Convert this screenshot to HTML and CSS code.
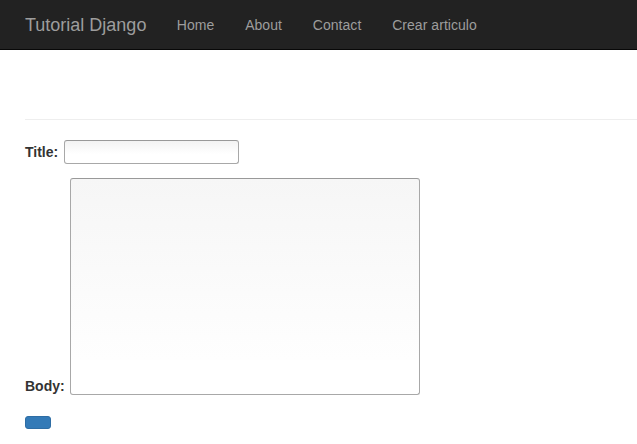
FILE: index.html
```html
<!DOCTYPE html>
<html>
<head>
<meta charset="utf-8">
<title>Tutorial Django</title>
<link rel="stylesheet" href="styles.css">
</head>
<body>
<nav class="navbar">
  <a class="brand" href="#">Tutorial Django</a>
  <ul class="nav">
    <li><a href="#">Home</a></li>
    <li><a href="#">About</a></li>
    <li><a href="#">Contact</a></li>
    <li><a href="#">Crear articulo</a></li>
  </ul>
</nav>
<main class="content">
  <hr class="rule">
  <form class="form">
    <div class="row row-title">
      <label class="label label-title" for="title">Title:</label>
      <input class="input" id="title" type="text">
    </div>
    <div class="row row-body">
      <label class="label label-body" for="body">Body:</label>
      <textarea class="textarea" id="body"></textarea>
    </div>
    <button class="submit" type="submit"></button>
  </form>
</main>
</body>
</html>
```
FILE: styles.css
```css
* { box-sizing: border-box; }
html, body { margin: 0; padding: 0; }
body {
  font-family: "Liberation Sans", Arial, sans-serif;
  font-size: 14px;
  line-height: 20px;
  color: #333;
  background: #fff;
}
.navbar {
  display: flex;
  height: 50px;
  background: #222;
  border-bottom: 1px solid #080808;
  padding-left: 10px;
}
.brand {
  display: block;
  padding: 15px;
  height: 49px;
  font-size: 18px;
  line-height: 20px;
  color: #9d9d9d;
  text-decoration: none;
}
.nav {
  display: flex;
  list-style: none;
  margin: 0;
  padding: 0;
}
.nav a {
  display: block;
  padding: 15px 15.4px;
  line-height: 20px;
  color: #9d9d9d;
  text-decoration: none;
  letter-spacing: 0.05px;
}
.content {
  padding-left: 25px;
}
.rule {
  margin: 69px 0 0 0;
  border: 0;
  border-top: 1px solid #eee;
  height: 0;
}
.form {
  padding-top: 20px;
}
.row {
  display: flex;
  gap: 5.5px;
}
.row-title { align-items: flex-start; }
.row-body { align-items: flex-end; margin-top: 14px; }
.label {
  font-weight: bold;
  line-height: 20px;
}
.label-title { margin-top: 2px; }
.label-body { margin-bottom: -1px; }
.input {
  width: 175px;
  height: 24px;
  margin: 0;
  border: 1px solid #a8a8a8;
  border-top-color: #999;
  border-radius: 3px;
  background: linear-gradient(#f3f3f3, #fff 60%);
  font-family: inherit;
}
.textarea {
  width: 350px;
  height: 217px;
  margin: 0;
  border: 1px solid #a8a8a8;
  border-top-color: #999;
  border-radius: 3px;
  background: linear-gradient(#f6f6f6, #fefefe 84%, #fff 84%);
  resize: none;
  font-family: inherit;
}
.submit {
  display: block;
  margin-top: 21px;
  width: 26px;
  height: 13px;
  padding: 0;
  border: 1px solid #2e6da4;
  border-radius: 3px;
  background: #337ab7;
}
```
